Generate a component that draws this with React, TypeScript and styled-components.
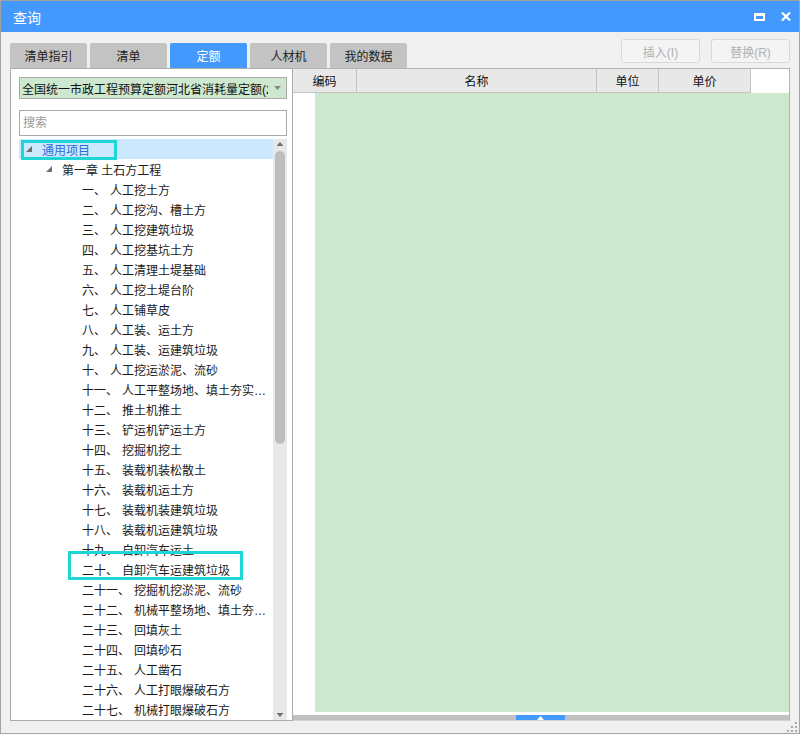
import React from "react";
import styled, { createGlobalStyle } from "styled-components";

const GlobalStyle = createGlobalStyle`
  html, body {
    margin: 0;
    padding: 0;
    background: #ffffff;
  }
  body {
    font-family: "Liberation Sans", "Noto Sans CJK SC", sans-serif;
    font-size: 12px;
    color: #1a1a1a;
  }
  * {
    box-sizing: border-box;
  }
`;

const TABS = ["清单指引", "清单", "定额", "人材机", "我的数据"];

const ITEMS = [
  ["一", "人工挖土方"],
  ["二", "人工挖沟、槽土方"],
  ["三", "人工挖建筑垃圾"],
  ["四", "人工挖基坑土方"],
  ["五", "人工清理土堤基础"],
  ["六", "人工挖土堤台阶"],
  ["七", "人工铺草皮"],
  ["八", "人工装、运土方"],
  ["九", "人工装、运建筑垃圾"],
  ["十", "人工挖运淤泥、流砂"],
  ["十一", "人工平整场地、填土夯实、原土夯实"],
  ["十二", "推土机推土"],
  ["十三", "铲运机铲运土方"],
  ["十四", "挖掘机挖土"],
  ["十五", "装载机装松散土"],
  ["十六", "装载机运土方"],
  ["十七", "装载机装建筑垃圾"],
  ["十八", "装载机运建筑垃圾"],
  ["十九", "自卸汽车运土"],
  ["二十", "自卸汽车运建筑垃圾"],
  ["二十一", "挖掘机挖淤泥、流砂"],
  ["二十二", "机械平整场地、填土夯实、原土夯实"],
  ["二十三", "回填灰土"],
  ["二十四", "回填砂石"],
  ["二十五", "人工凿石"],
  ["二十六", "人工打眼爆破石方"],
  ["二十七", "机械打眼爆破石方"],
];

const COLUMNS = [
  { label: "编码", width: 64 },
  { label: "名称", width: 240 },
  { label: "单位", width: 62 },
  { label: "单价", width: 92 },
];

export default function App() {
  return (
    <>
      <GlobalStyle />
      <Window>
        <TitleBar>
          <Title>查询</Title>
          <WindowControls>
            <svg width="11" height="8" viewBox="0 0 11 8">
              <rect x="1" y="1" width="9" height="6" fill="none" stroke="#fff" strokeWidth="2" />
              <rect x="0" y="0" width="11" height="3" fill="#fff" />
            </svg>
            <svg width="10" height="9" viewBox="0 0 10 9">
              <path d="M1 0.5 L9 8.5 M9 0.5 L1 8.5" stroke="#fff" strokeWidth="2.2" />
            </svg>
          </WindowControls>
        </TitleBar>

        <Toolbar>
          <TabList>
            {TABS.map((t) => (
              <Tab key={t} $active={t === "定额"}>
                {t}
              </Tab>
            ))}
          </TabList>
          <Actions>
            <ActionButton disabled>插入(I)</ActionButton>
            <ActionButton disabled>替换(R)</ActionButton>
          </Actions>
        </Toolbar>

        <Main>
          <LeftPanel>
            <Dropdown>
              <DropdownText>全国统一市政工程预算定额河北省消耗量定额(2012)</DropdownText>
              <DropdownArrow>
                <svg width="7" height="4" viewBox="0 0 7 4">
                  <polygon points="0,0 7,0 3.5,4" fill="#8a8a8a" />
                </svg>
              </DropdownArrow>
            </Dropdown>
            <SearchBox placeholder="搜索" />
            <Tree>
              <TreeList>
                <Row $selected $indent={7}>
                  <Toggle />
                  <RootLabel>通用项目</RootLabel>
                  <Annotation $left={2} $top={1} $width={96} $height={20} />
                </Row>
                <Row $indent={27}>
                  <Toggle />
                  <Label>第一章 土石方工程</Label>
                </Row>
                {ITEMS.map(([num, name]) => (
                  <Row key={num} $indent={63}>
                    <Label>
                      {num}、<Name>{name}</Name>
                    </Label>
                    {num === "二十" && <Annotation $left={49} $top={-8} $width={175} $height={29} />}
                  </Row>
                ))}
              </TreeList>
              <ScrollTrack>
                <ArrowUp />
                <ScrollThumb />
                <ArrowDown />
              </ScrollTrack>
            </Tree>
          </LeftPanel>

          <RightPanel>
            <HeaderRow>
              {COLUMNS.map((c) => (
                <HeaderCell key={c.label} $width={c.width}>
                  {c.label}
                </HeaderCell>
              ))}
            </HeaderRow>
            <GridBody>
              <RowHeaderColumn />
              <DataArea />
            </GridBody>
            <HScroll>
              <HThumb>
                <svg width="7" height="4" viewBox="0 0 7 4">
                  <polygon points="0,4 7,4 3.5,0" fill="#fff" />
                </svg>
              </HThumb>
            </HScroll>
          </RightPanel>
        </Main>

        <Footer>
          <svg width="11" height="10" viewBox="0 0 11 10">
            <rect x="8" y="0" width="2" height="2" fill="#a8a8a8" />
            <rect x="4" y="4" width="2" height="2" fill="#a8a8a8" />
            <rect x="8" y="4" width="2" height="2" fill="#a8a8a8" />
            <rect x="0" y="8" width="2" height="2" fill="#a8a8a8" />
            <rect x="4" y="8" width="2" height="2" fill="#a8a8a8" />
            <rect x="8" y="8" width="2" height="2" fill="#a8a8a8" />
          </svg>
        </Footer>
      </Window>
    </>
  );
}

const Window = styled.div`
  width: 800px;
  height: 734px;
  border: 1px solid #a3a3a3;
  background: #f0f0f0;
  display: flex;
  flex-direction: column;
`;

const TitleBar = styled.div`
  height: 31px;
  flex-shrink: 0;
  background: #4499ff;
  display: flex;
  align-items: center;
  padding: 0 8px 0 12px;
  color: #ffffff;
`;

const Title = styled.span`
  font-size: 14px;
`;

const WindowControls = styled.div`
  margin-left: auto;
  display: flex;
  align-items: center;
  gap: 16px;
`;

const Toolbar = styled.div`
  height: 36px;
  flex-shrink: 0;
  display: flex;
  align-items: flex-end;
  padding: 0 9px;
`;

const TabList = styled.div`
  display: flex;
  gap: 3px;
`;

const Tab = styled.div<{ $active?: boolean }>`
  width: 77px;
  height: 25px;
  display: flex;
  align-items: center;
  justify-content: center;
  border-radius: 2px 2px 0 0;
  background: ${(p) => (p.$active ? "#4499ff" : "#c3c3c3")};
  color: ${(p) => (p.$active ? "#ffffff" : "#222222")};
  font-size: 12px;
`;

const Actions = styled.div`
  margin-left: auto;
  align-self: flex-start;
  margin-top: 7px;
  display: flex;
  gap: 11px;
`;

const ActionButton = styled.button`
  width: 79px;
  height: 24px;
  border: 1px solid #d8d8d8;
  border-radius: 3px;
  background: #f4f4f4;
  color: #b0b0b0;
  font-family: inherit;
  font-size: 12px;
  padding: 0;
`;

const Main = styled.div`
  height: 653px;
  flex-shrink: 0;
  display: flex;
  padding: 0 9px;
`;

const LeftPanel = styled.div`
  width: 283px;
  flex-shrink: 0;
  border: 1px solid #acacac;
  background: #ffffff;
  display: flex;
  flex-direction: column;
  padding: 8px 5px 0 8px;
`;

const Dropdown = styled.div`
  height: 22px;
  flex-shrink: 0;
  border: 1px solid #aaaaaa;
  background: #cde8cf;
  display: flex;
  align-items: center;
  padding-left: 2px;
`;

const DropdownText = styled.span`
  flex: 1;
  overflow: hidden;
  white-space: nowrap;
  color: #111111;
`;

const DropdownArrow = styled.span`
  width: 18px;
  display: flex;
  justify-content: center;
`;

const SearchBox = styled.input`
  height: 26px;
  flex-shrink: 0;
  margin-top: 11px;
  border: 1px solid #aaaaaa;
  background: #ffffff;
  padding: 0 3px;
  font-family: inherit;
  font-size: 12px;
  outline: none;
  &::placeholder {
    color: #9a9a9a;
  }
`;

const Tree = styled.div`
  flex: 1;
  min-height: 0;
  margin-top: 3px;
  display: flex;
`;

const TreeList = styled.div`
  flex: 1;
  min-width: 0;
  overflow: hidden;
`;

const Row = styled.div<{ $selected?: boolean; $indent: number }>`
  position: relative;
  height: 20px;
  display: flex;
  align-items: center;
  padding-left: ${(p) => p.$indent}px;
  padding-right: 5px;
  background: ${(p) => (p.$selected ? "#cce8ff" : "transparent")};
  white-space: nowrap;
`;

const Toggle = styled.span`
  width: 6px;
  height: 6px;
  flex-shrink: 0;
  margin-right: 10px;
  background: #6e6e6e;
  clip-path: polygon(100% 0, 100% 100%, 0 100%);
`;

const Label = styled.span`
  overflow: hidden;
  text-overflow: ellipsis;
  color: #1a1a1a;
`;

const RootLabel = styled(Label)`
  color: #2b6cd8;
`;

const Name = styled.span`
  margin-left: 4px;
`;

const Annotation = styled.div<{ $left: number; $top: number; $width: number; $height: number }>`
  position: absolute;
  left: ${(p) => p.$left}px;
  top: ${(p) => p.$top}px;
  width: ${(p) => p.$width}px;
  height: ${(p) => p.$height}px;
  border: 3px solid #1ed6d6;
  pointer-events: none;
`;

const ScrollTrack = styled.div`
  width: 14px;
  flex-shrink: 0;
  background: #e8e8e8;
  display: flex;
  flex-direction: column;
  align-items: center;
  padding: 3px 0 3px;
`;

const ArrowUp = styled.span`
  width: 7px;
  height: 4px;
  background: #6e6e6e;
  clip-path: polygon(50% 0, 100% 100%, 0 100%);
`;

const ArrowDown = styled(ArrowUp)`
  margin-top: auto;
  clip-path: polygon(0 0, 100% 0, 50% 100%);
`;

const ScrollThumb = styled.div`
  width: 10px;
  height: 293px;
  margin-top: 5px;
  border-radius: 5px;
  background: #bdbdbd;
`;

const RightPanel = styled.div`
  flex: 1;
  min-width: 0;
  border: 1px solid #b4b4b4;
  border-left: none;
  border-bottom-color: #d2d2d2;
  background: #ffffff;
  display: flex;
  flex-direction: column;
`;

const HeaderRow = styled.div`
  height: 24px;
  flex-shrink: 0;
  display: flex;
`;

const HeaderCell = styled.div<{ $width: number }>`
  width: ${(p) => p.$width}px;
  height: 24px;
  display: flex;
  align-items: center;
  justify-content: center;
  background: #e8e8e8;
  border-right: 1px solid #c4c4c4;
  border-bottom: 1px solid #c4c4c4;
  color: #111111;
`;

const GridBody = styled.div`
  flex: 1;
  display: flex;
  min-height: 0;
`;

const RowHeaderColumn = styled.div`
  width: 22px;
  flex-shrink: 0;
  background: #ffffff;
`;

const DataArea = styled.div`
  flex: 1;
  background: #cde8cf;
`;

const HScroll = styled.div`
  height: 5px;
  margin-top: 3px;
  flex-shrink: 0;
  background: #c0c0c0;
  display: flex;
`;

const HThumb = styled.div`
  width: 49px;
  margin-left: 223px;
  background: #4499ff;
  display: flex;
  align-items: center;
  justify-content: center;
`;

const Footer = styled.div`
  flex: 1;
  display: flex;
  justify-content: flex-end;
  align-items: flex-end;
  padding: 0 1px 1px 0;
`;
